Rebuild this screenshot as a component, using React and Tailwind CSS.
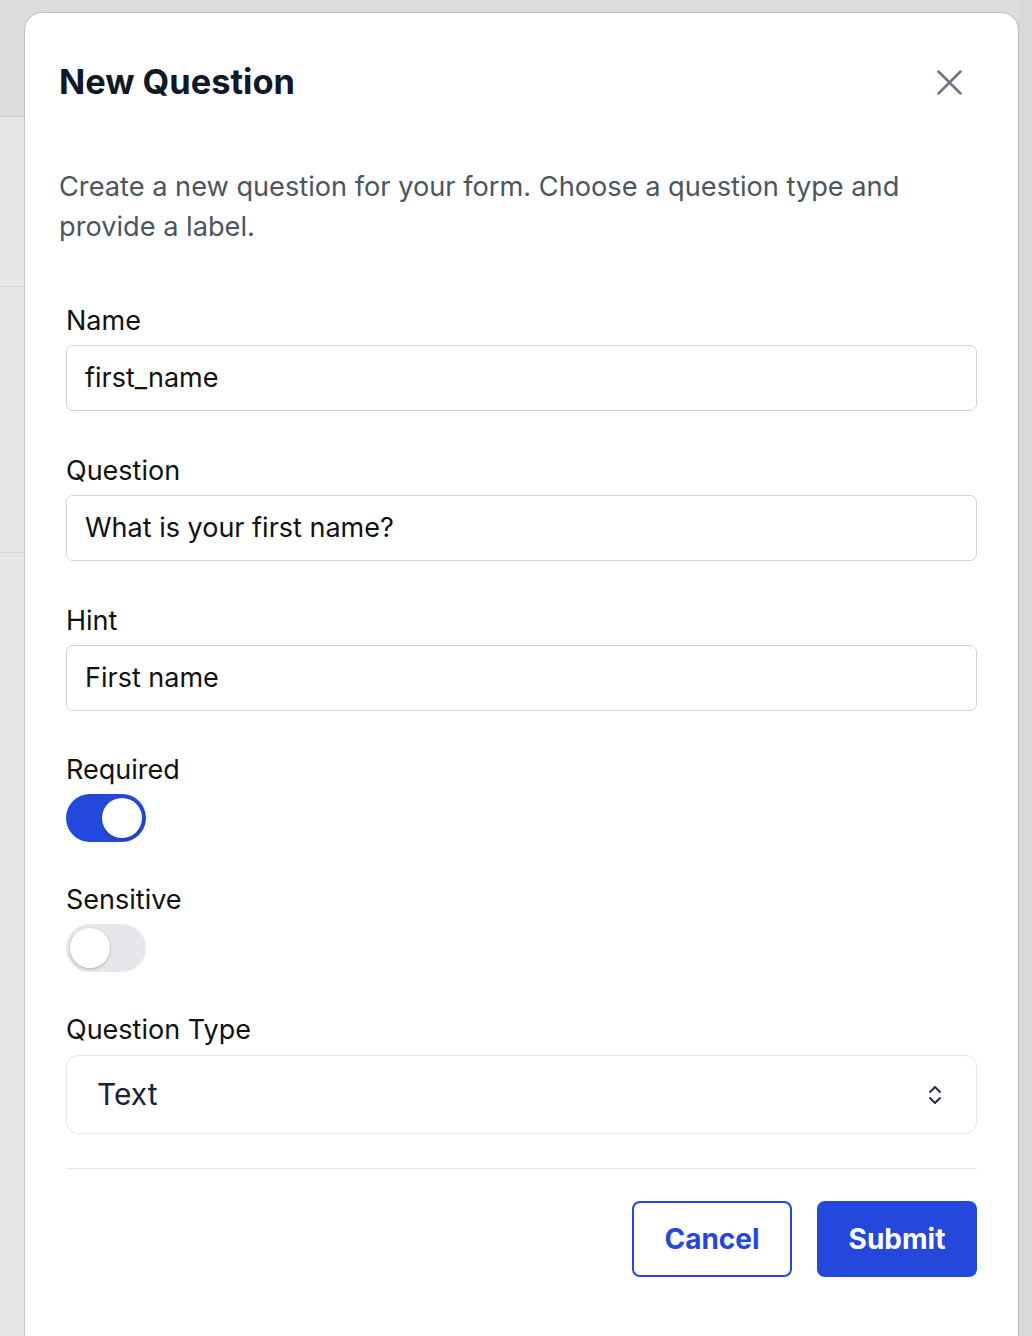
import { useState } from 'react'

function Toggle({ on, onChange }) {
  return (
    <button
      type="button"
      onClick={() => onChange(!on)}
      className={`flex h-[48px] w-[80px] items-center rounded-full p-[4px] ${on ? 'justify-end bg-[#2548dc]' : 'justify-start bg-[#e5e7eb]'}`}
    >
      <span className="block h-[40px] w-[40px] rounded-full bg-white shadow-[0_1px_3px_rgba(0,0,0,0.25)]" />
    </button>
  )
}

function Field({ label, value }) {
  return (
    <div className="flex flex-col">
      <label className="mb-[8px] text-[27px] leading-[32px] text-[#111111]">{label}</label>
      <div className="flex h-[66px] items-center rounded-[7px] border border-[#d1d5db] bg-white px-[18px] text-[27px] text-[#111111]">
        {value}
      </div>
    </div>
  )
}

export default function App() {
  const [required, setRequired] = useState(true)
  const [sensitive, setSensitive] = useState(false)

  return (
    <div className="relative h-[1336px] w-full overflow-hidden bg-[#e7e7e8] font-['Inter',sans-serif]">
      {/* page behind the overlay */}
      <div className="flex h-full">
        <div className="flex flex-1 flex-col">
          <div className="h-[117px] border-b border-[#cfd0d2] bg-[#dbdcde]" />
          <div className="h-[170px] border-b border-[#d2d3d5]" />
          <div className="h-[266px] border-b border-[#d2d3d5]" />
        </div>
        <div className="w-[14px] bg-[#d9d9db]" />
      </div>

      {/* dialog */}
      <div className="absolute left-[25px] right-[14px] top-[13px] bottom-[-40px] rounded-[17px] bg-white px-[34px] pt-[49px] shadow-[0_0_0_1px_rgba(0,0,0,0.13)]">
        <div className="flex items-center justify-between">
          <h2 className="text-[34.4px] font-bold leading-[40px] text-[#111827]">New Question</h2>
          <button type="button" className="mr-[22px] text-[#6b7280]">
            <svg width="25" height="25" viewBox="0 0 25 25" fill="none" stroke="currentColor" strokeWidth="2.5" strokeLinecap="round">
              <path d="M1.5 1.5 L23.5 23.5" />
              <path d="M23.5 1.5 L1.5 23.5" />
            </svg>
          </button>
        </div>

        <p className="mt-[65px] text-[27.2px] leading-[40px] text-[#4b5563]">
          Create a new question for your form. Choose a question type and provide a label.
        </p>

        <div className="mt-[58px] flex flex-col gap-[44px] px-[7px]">
          <Field label="Name" value="first_name" />
          <Field label="Question" value="What is your first name?" />
          <Field label="Hint" value="First name" />

          <div className="-mt-[1px] flex flex-col items-start">
            <label className="mb-[8px] text-[27px] leading-[32px] text-[#111111]">Required</label>
            <Toggle on={required} onChange={setRequired} />
          </div>

          <div className="-mt-[2px] flex flex-col items-start">
            <label className="mb-[8px] text-[27px] leading-[32px] text-[#111111]">Sensitive</label>
            <Toggle on={sensitive} onChange={setSensitive} />
          </div>

          <div className="-mt-[2px] flex flex-col">
            <label className="mb-[9px] text-[27px] leading-[32px] text-[#111111]">Question Type</label>
            <div className="flex h-[79px] items-center justify-between rounded-[12px] border border-[#e5e7eb] bg-white pl-[30px] pr-[34px]">
              <span className="text-[30px] text-[#1a2233]">Text</span>
              <svg width="14" height="20" viewBox="0 0 14 20" fill="none" stroke="#1f2937" strokeWidth="1.8" strokeLinecap="round" strokeLinejoin="round">
                <path d="M2 7 L7 2 L12 7" />
                <path d="M2 13 L7 18 L12 13" />
              </svg>
            </div>
          </div>

          <div className="-mt-[10px] border-t border-[#e5e7eb] pt-[32px]">
            <div className="flex justify-end gap-[25px]">
              <button type="button" className="h-[76px] w-[160px] rounded-[8px] border-2 border-[#2548dc] bg-white text-[28px] font-bold text-[#2548dc]">
                Cancel
              </button>
              <button type="button" className="h-[76px] w-[160px] rounded-[8px] bg-[#2548dc] text-[28px] font-bold text-white">
                Submit
              </button>
            </div>
          </div>
        </div>
      </div>
    </div>
  )
}
